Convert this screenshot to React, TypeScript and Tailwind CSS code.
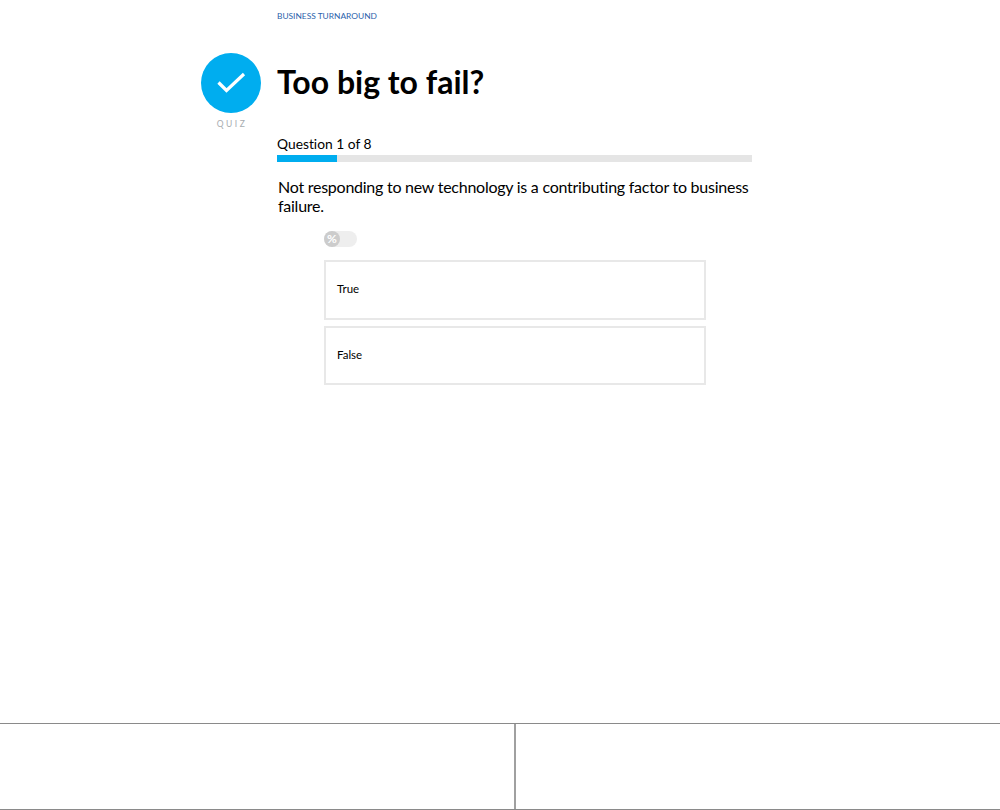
import React from "react";

export default function App() {
  return (
    <div className="h-[810px] w-[1000px] bg-white flex flex-col font-['Lato','Liberation_Sans',sans-serif] text-black overflow-hidden [font-variant-ligatures:none]">
      <main className="flex-1 flex pl-[201px]">
        <aside className="w-[60px] mt-[53px] flex flex-col items-center">
          <div className="w-[60px] h-[60px] rounded-full bg-[#00adef] flex items-center justify-center">
            <svg width="32" height="32" viewBox="0 0 32 32" fill="none" stroke="white" strokeWidth="3.2">
              <path d="M3.5 15.5 L11.5 23.5 L29 7" />
            </svg>
          </div>
          <div className="mt-[6px] text-[8.5px] leading-[11px] tracking-[2.5px] pl-[2px] text-[#a8adb0]">QUIZ</div>
        </aside>
        <section className="ml-[16px] w-[475px] flex flex-col">
          <div className="mt-[10px] text-[8.4px] leading-[12px] text-[#2b62ab]">BUSINESS TURNAROUND</div>
          <h1 className="mt-[33px] text-[32px] leading-[54px] font-bold">Too big to fail?</h1>
          <div className="mt-[26px] text-[13.8px] leading-[18px]">Question 1 of 8</div>
          <div className="mt-[2px] h-[7px] bg-[#e5e5e5]">
            <div className="h-full w-[60px] bg-[#00adef]" />
          </div>
          <p className="mt-[15px] text-[16px] tracking-[-0.25px] leading-[19px] pl-[1px]">
            Not responding to new technology is a contributing factor to business failure.
          </p>
          <div className="ml-[47px] w-[382px]">
            <div className="mt-[16px] w-[33px] h-[16px] rounded-full bg-[#eeeeee] relative">
              <div className="w-[16px] h-[16px] rounded-full bg-[#cccccc] text-white text-[12px] leading-[16px] font-bold text-center">%</div>
            </div>
            <div className="mt-[13px] h-[60px] border-2 border-[#e8e8e8] flex items-center pl-[11px] pb-[2px] text-[11.5px]">True</div>
            <div className="mt-[6px] h-[59px] border-2 border-[#e8e8e8] flex items-center pl-[11px] pb-[2px] text-[11.5px]">False</div>
          </div>
        </section>
      </main>
      <footer className="h-[87px] border-t border-b border-[#8a8a8a] flex">
        <div className="w-[516px] border-r-2 border-[#a0a0a0]" />
        <div className="flex-1" />
      </footer>
    </div>
  );
}
